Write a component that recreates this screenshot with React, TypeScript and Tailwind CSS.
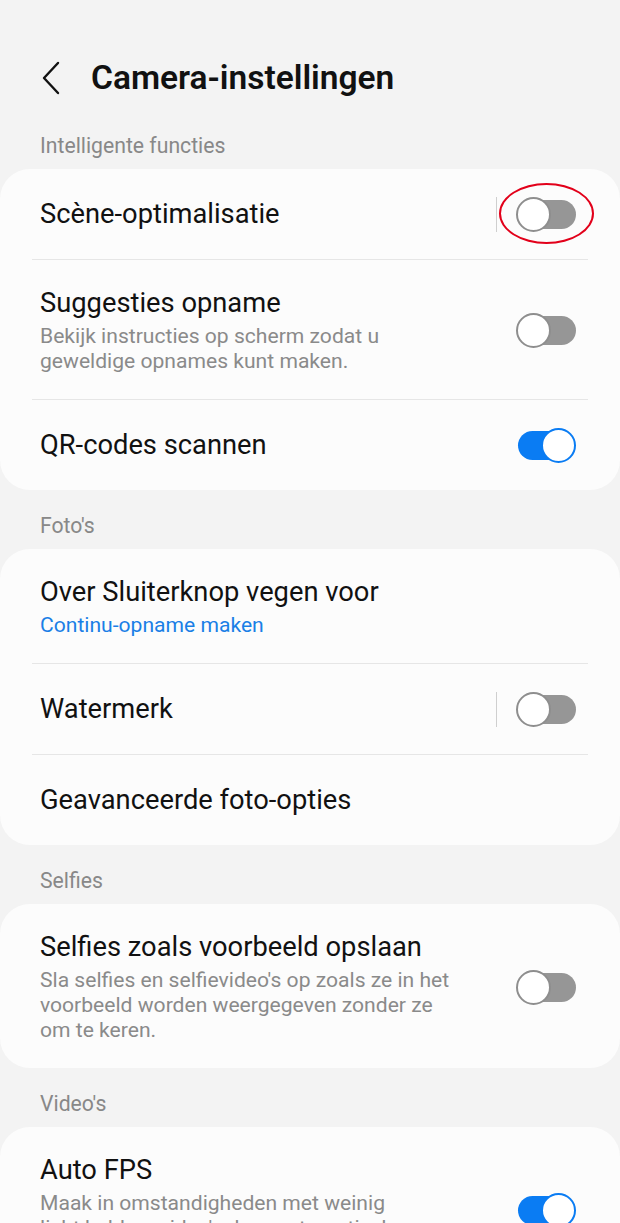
import type { ReactNode } from "react";

function Toggle({ on = false }: { on?: boolean }) {
  if (on) {
    return (
      <div className="relative h-[35px] w-[60px] shrink-0">
        <div className="absolute left-[2px] top-[3px] h-[29px] w-[56px] rounded-full bg-[#0a7cf3]" />
        <div className="absolute right-0 top-0 h-[35px] w-[35px] rounded-full border-2 border-[#0a7cf3] bg-white" />
      </div>
    );
  }
  return (
    <div className="relative h-[35px] w-[60px] shrink-0">
      <div className="absolute right-0 top-[3px] h-[29px] w-[56px] rounded-full bg-[#969696]" />
      <div className="absolute left-0 top-0 h-[35px] w-[35px] rounded-full border-2 border-[#8e8e8e] bg-white" />
    </div>
  );
}

function Row({
  title,
  sub,
  subBlue,
  toggle,
  divider,
  first,
  circled,
}: {
  title: string;
  sub?: ReactNode;
  subBlue?: boolean;
  toggle?: "on" | "off";
  divider?: boolean;
  first?: boolean;
  circled?: boolean;
}) {
  return (
    <div className={first ? "" : "border-t border-[#e6e6e6]"}>
      <div
        className={`flex items-center pl-2 pr-3 ${
          sub ? "pt-[28px] pb-[26px]" : "h-[90px]"
        }`}
      >
        <div className="flex-1 whitespace-nowrap">
          <div className="text-[27.3px] leading-[30px] text-[#111]">{title}</div>
          {sub && (
            <div
              className={`mt-[5px] text-[21.1px] leading-[25px] ${
                subBlue ? "text-[#1a7fe6]" : "text-[#8a8a8a]"
              }`}
            >
              {sub}
            </div>
          )}
        </div>
        {toggle && (
          <div className="relative flex items-center">
            {divider && <div className="mr-[19px] h-[35px] w-px bg-[#cfcfcf]" />}
            <Toggle on={toggle === "on"} />
            {circled && (
              <div className="absolute -right-[18px] -top-[14px] h-[61px] w-[95px] rounded-[50%] border-2 border-[#e2001a]" />
            )}
          </div>
        )}
      </div>
    </div>
  );
}

function Section({ label, children }: { label: string; children: ReactNode }) {
  return (
    <>
      <div className="px-10 pt-[24px] pb-[11px] text-[21.2px] leading-[24px] text-[#888]">
        {label}
      </div>
      <div className="rounded-[30px] bg-[#fcfcfc] px-8">{children}</div>
    </>
  );
}

export default function App() {
  return (
    <div
      className="h-[1223px] w-[620px] overflow-hidden bg-[#f3f3f3]"
      style={{ fontFamily: "Roboto, 'Noto Sans', sans-serif" }}
    >
      <div className="flex h-[110px] items-start pt-[58px]">
        <svg
          className="ml-[41px] mt-[3px] h-[34px] w-[20px]"
          viewBox="0 0 20 34"
          fill="none"
          stroke="#111"
          strokeWidth="2.4"
          strokeLinecap="round"
          strokeLinejoin="round"
        >
          <path d="M17 2 L3 17 L17 32" />
        </svg>
        <div className="ml-[30px] text-[33.5px] font-semibold leading-[40px] text-[#111]">
          Camera-instellingen
        </div>
      </div>

      <Section label="Intelligente functies">
        <Row first title="Scène-optimalisatie" toggle="off" divider circled />
        <Row
          title="Suggesties opname"
          sub={
            <>
              Bekijk instructies op scherm zodat u
              <br />
              geweldige opnames kunt maken.
            </>
          }
          toggle="off"
        />
        <Row title="QR-codes scannen" toggle="on" />
      </Section>

      <Section label="Foto's">
        <Row first title="Over Sluiterknop vegen voor" sub="Continu-opname maken" subBlue />
        <Row title="Watermerk" toggle="off" divider />
        <Row title="Geavanceerde foto-opties" />
      </Section>

      <Section label="Selfies">
        <Row
          first
          title="Selfies zoals voorbeeld opslaan"
          sub={
            <>
              Sla selfies en selfievideo's op zoals ze in het
              <br />
              voorbeeld worden weergegeven zonder ze
              <br />
              om te keren.
            </>
          }
          toggle="off"
        />
      </Section>

      <Section label="Video's">
        <Row
          first
          title="Auto FPS"
          sub={
            <>
              Maak in omstandigheden met weinig
              <br />
              licht heldere video's door automatisch
              <br />
              de framesnelheid te optimaliseren.
            </>
          }
          toggle="on"
        />
      </Section>
    </div>
  );
}
